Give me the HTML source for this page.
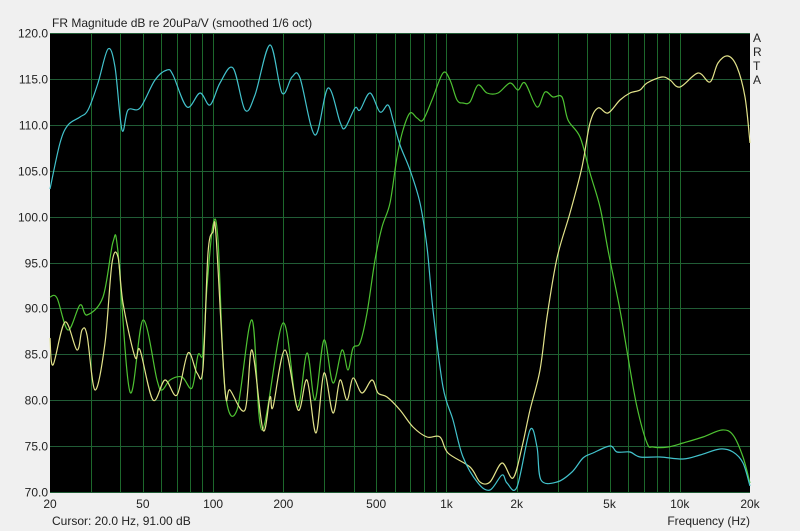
<!DOCTYPE html>
<html><head><meta charset="utf-8"><style>
body{margin:0;width:800px;height:531px;background:#f0f0f0;overflow:hidden;font-family:"Liberation Sans",sans-serif;}
svg{position:absolute;left:0;top:0}
text{font-family:"Liberation Sans",sans-serif;font-size:12px;fill:#222}
</style></head><body>
<svg id="s" width="800" height="531" xmlns="http://www.w3.org/2000/svg">
<rect x="50" y="33" width="700" height="459" fill="#000"/>
<g id="grid" stroke-width="1"></g>
<g id="curves" fill="none" stroke-width="1.2"></g>
<text x="52" y="27" font-size="12">FR Magnitude dB re 20uPa/V (smoothed 1/6 oct)</text>
<g id="ylab" text-anchor="end"></g>
<g id="xlab" text-anchor="middle"></g>
<text x="753" y="42">A</text><text x="753" y="56">R</text><text x="753" y="70">T</text><text x="753" y="84">A</text>
<text x="52" y="525">Cursor: 20.0 Hz, 91.00 dB</text>
<text x="750" y="525" text-anchor="end">Frequency (Hz)</text>
</svg>
<script>
var NS="http://www.w3.org/2000/svg";
function X(f){return 50+Math.log10(f/20)*700/3}
function Y(d){return 33+(120-d)*459/50}
function el(t,a,p,txt){var e=document.createElementNS(NS,t);for(var k in a)e.setAttribute(k,a[k]);if(txt)e.textContent=txt;p.appendChild(e);return e}
var g=document.getElementById('grid');
for(var d=70;d<=120;d+=5){var y=Math.round(Y(d))+.5;el('line',{x1:50,x2:750,y1:y,y2:y,stroke:'#215c36'},g);
el('text',{x:48,y:y+4},document.getElementById('ylab'),d.toFixed(1));}
var fs=[30,40,50,60,70,80,90,100,200,300,400,500,600,700,800,900,1000,2000,3000,4000,5000,6000,7000,8000,9000,10000];
fs.forEach(function(f){var x=Math.round(X(f))+.5;el('line',{x1:x,x2:x,y1:33,y2:492,stroke:'#1d682c'},g)});
var labs=[[20,'20'],[50,'50'],[100,'100'],[200,'200'],[500,'500'],[1000,'1k'],[2000,'2k'],[5000,'5k'],[10000,'10k'],[20000,'20k']];
labs.forEach(function(l){el('text',{x:X(l[0]),y:508},document.getElementById('xlab'),l[1])});
function path(P,col){
var d='M'+P[0][0]+','+P[0][1];
for(var i=0;i<P.length-1;i++){var p0=P[i-1]||P[i],p1=P[i],p2=P[i+1],p3=P[i+2]||p2;
d+='C'+(p1[0]+(p2[0]-p0[0])/6).toFixed(1)+','+(p1[1]+(p2[1]-p0[1])/6).toFixed(1)+' '+(p2[0]-(p3[0]-p1[0])/6).toFixed(1)+','+(p2[1]-(p3[1]-p1[1])/6).toFixed(1)+' '+p2[0]+','+p2[1];}
el('path',{d:d,stroke:col},document.getElementById('curves'));}
var cyan=[[50,189],[60,143],[68,125],[80,117],[88,110],[98,83],[108,49],[115,67],[122,130],[128,110],[140,108],[155,80],[167,70],[173,75],[187,107],[200,93],[210,105],[220,83],[233,68],[245,110],[255,95],[270,45],[282,93],[292,77],[300,78],[315,135],[328,88],[340,122],[345,128],[355,108],[360,110],[370,93],[380,112],[388,105],[393,120],[400,145],[410,170],[420,203],[427,247],[433,310],[443,387],[453,420],[463,457],[478,483],[490,490],[502,475],[507,483],[517,487],[530,430],[537,447],[541,480],[557,482],[572,472],[583,458],[593,453],[610,446],[617,452],[630,452],[640,457],[660,457],[683,459],[700,455],[720,449],[733,452],[743,463],[750,486]];
var green=[[50,297],[57,298],[68,330],[80,305],[87,315],[103,297],[113,242],[118,252],[130,392],[143,320],[157,380],[162,390],[170,380],[182,377],[192,388],[198,355],[203,353],[207,287],[213,225],[218,240],[225,390],[237,410],[252,320],[262,430],[283,323],[297,407],[307,353],[315,400],[324,340],[333,383],[342,350],[348,370],[353,348],[360,343],[367,313],[375,260],[382,227],[390,203],[397,157],[403,130],[410,113],[417,118],[423,120],[432,100],[443,73],[450,80],[457,100],[463,103],[470,102],[478,85],[487,93],[498,93],[510,83],[518,90],[525,83],[537,107],[545,92],[553,97],[562,97],[568,120],[580,137],[590,173],[600,207],[608,250],[620,310],[628,357],[637,407],[647,443],[653,447],[668,447],[683,443],[703,437],[722,430],[733,435],[743,457],[750,483]];
var yel=[[50,338],[53,365],[65,322],[77,350],[82,330],[87,335],[95,390],[105,343],[112,263],[118,257],[123,303],[135,357],[140,350],[153,400],[165,380],[177,395],[188,353],[197,373],[203,368],[208,253],[213,232],[216,235],[225,390],[230,390],[245,410],[252,350],[263,430],[270,397],[273,407],[285,350],[298,410],[307,380],[316,433],[324,373],[333,413],[340,380],[347,400],[353,378],[362,393],[372,380],[378,393],[387,397],[400,410],[413,427],[427,437],[440,437],[448,453],[470,467],[480,482],[490,482],[502,463],[513,478],[522,447],[530,410],[540,370],[547,317],[557,258],[570,213],[582,167],[590,123],[598,108],[608,113],[620,100],[630,93],[640,90],[647,83],[662,77],[670,80],[680,87],[698,73],[710,82],[718,63],[728,56],[737,67],[745,97],[750,143]];
path(green,'#4ec232');path(yel,'#e2e28a');path(cyan,'#42c2cc');
</script>
</body></html>
